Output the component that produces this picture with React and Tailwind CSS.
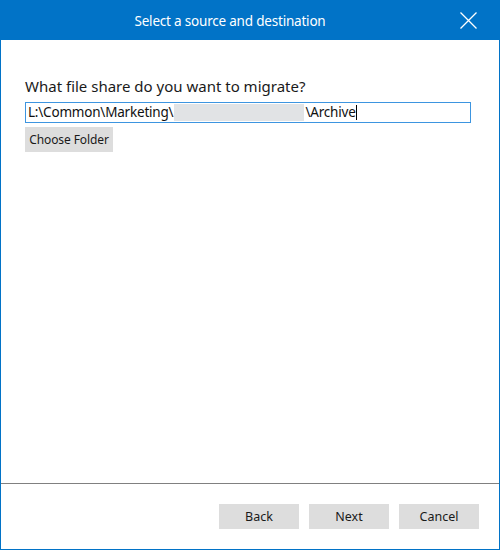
export default function App() {
  const font = { fontFamily: '"Noto Sans", "Open Sans", sans-serif' };
  return (
    <div
      className="w-[500px] h-[550px] flex flex-col bg-white border-x border-b border-[#0173c7] text-[#1a1a1a]"
      style={font}
    >
      <div className="h-10 shrink-0 bg-[#0173c7] flex items-center text-white">
        <div className="w-[458px] text-center text-[13.5px] leading-5 tracking-[-0.2px] pt-[1px]">
          Select a source and destination
        </div>
        <svg width="17" height="17" viewBox="0 0 17 17" className="ml-[1px]">
          <path d="M0.5 0.5 L16.5 16.5 M16.5 0.5 L0.5 16.5" stroke="white" strokeWidth="1.3" />
        </svg>
      </div>
      <div className="flex-1 px-6 pt-[36px]">
        <div className="text-[15px] leading-5 text-[#1a1a1a]">
          What file share do you want to migrate?
        </div>
        <div className="mt-[6px] w-[446px] h-[21px] border border-[#3d95e0] flex items-center pl-[2px] text-[13.5px] tracking-[-0.2px] text-[#111]">
          <span>L:\Common\Marketing\</span>
          <span className="w-[130px] h-[17px] bg-[#e1e3e5] ml-[1px] mr-[1px]" />
          <span>\Archive</span>
          <span className="w-px h-[15px] bg-black" />
        </div>
        <button className="mt-[4px] h-[25px] w-[88px] bg-[#dddddd] text-[12px] text-[#1a1a1a] tracking-[-0.1px]">
          Choose Folder
        </button>
      </div>
      <div className="shrink-0 border-t border-[#808080] flex justify-end gap-[10px] pt-5 pb-5 pr-5">
        <button className="w-20 h-[25px] bg-[#dddddd] text-[12.5px] text-[#1a1a1a] pt-[1px]">Back</button>
        <button className="w-20 h-[25px] bg-[#dddddd] text-[12.5px] text-[#1a1a1a] pt-[1px]">Next</button>
        <button className="w-20 h-[25px] bg-[#dddddd] text-[12.5px] text-[#1a1a1a] pt-[1px]">Cancel</button>
      </div>
    </div>
  );
}
